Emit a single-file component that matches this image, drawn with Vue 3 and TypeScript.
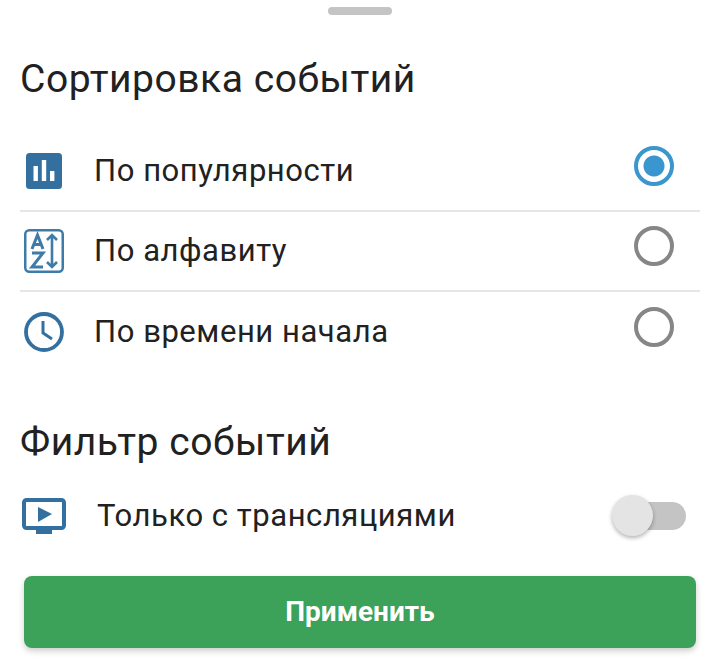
<script setup lang="ts">
// Rows of the sort list
const sortRows = [
  { key: 'popular', label: 'По популярности', selected: true },
  { key: 'alpha', label: 'По алфавиту', selected: false },
  { key: 'time', label: 'По времени начала', selected: false },
];
</script>

<template>
  <div class="sheet">
    <div class="handle"></div>
    <h2 class="title sort-title">Сортировка событий</h2>
    <div class="sort-list">
      <div v-for="row in sortRows" :key="row.key" class="sort-row">
        <span class="icon">
          <svg v-if="row.key === 'popular'" width="36" height="36" viewBox="0 0 36 36">
            <rect x="0" y="0" width="36" height="36" rx="3.5" fill="#33709f" />
            <rect x="7.5" y="13" width="4.4" height="15" fill="#fff" />
            <rect x="15.8" y="7" width="4.4" height="21" fill="#fff" />
            <rect x="24" y="18" width="4.4" height="10" fill="#fff" />
          </svg>
          <svg v-else-if="row.key === 'alpha'" width="40" height="44" viewBox="0 0 40 44" fill="none" stroke="#3f7ba8">
            <rect x="1.25" y="1.25" width="37.5" height="41.5" rx="4" stroke-width="2.5" />
            <path d="M8 20 L13.5 6 L19 20 M10 15.5 H17" stroke-width="3" />
            <path d="M8 24 H19 L8 38 H19" stroke-width="3" />
            <path d="M28 6 V38 M23 11 L28 6 L33 11 M23 33 L28 38 L33 33" stroke-width="2.6" />
          </svg>
          <svg v-else width="40" height="40" viewBox="0 0 40 40" fill="none" stroke="#33709f">
            <circle cx="20" cy="20" r="18" stroke-width="3.8" />
            <path d="M19 9 V21 L28 27" stroke-width="3" />
          </svg>
        </span>
        <span class="label">{{ row.label }}</span>
        <span :class="['radio', { on: row.selected }]"></span>
      </div>
    </div>
    <h2 class="title filter-title">Фильтр событий</h2>
    <div class="filter-row">
      <svg class="tv" width="44" height="37" viewBox="0 0 44 37">
        <rect x="2" y="2" width="40" height="28" rx="2.5" fill="none" stroke="#33709f" stroke-width="4" />
        <path d="M16 9 L30 16 L16 24 Z" fill="#33709f" />
        <rect x="14" y="30" width="16" height="6" fill="#33709f" />
      </svg>
      <span class="label">Только с трансляциями</span>
      <span class="switch"><span class="thumb"></span></span>
    </div>
    <button class="apply">Применить</button>
  </div>
</template>

<style>
html, body {
  margin: 0;
  background: #fff;
}
</style>

<style scoped>
.sheet {
  width: 720px;
  height: 662px;
  box-sizing: border-box;
  padding-top: 7px;
  overflow: hidden;
  background: #fff;
  font-family: Roboto, "Liberation Sans", sans-serif;
  color: #212121;
}
.handle {
  width: 64px;
  height: 8px;
  margin: 0 auto;
  border-radius: 4px;
  background: #c4c4c4;
}
.title {
  margin: 0;
  font-size: 39px;
  line-height: 44px;
  font-weight: 400;
  letter-spacing: 0.55px;
}
.sort-title {
  margin: 42px 0 0 20px;
}
.sort-list {
  margin: 31px 20px 0;
}
.sort-row {
  height: 80px;
  display: flex;
  align-items: center;
  box-sizing: border-box;
  border-bottom: 2px solid #e6e6e6;
}
.sort-row:last-child {
  border-bottom: none;
}
.icon {
  width: 75px;
  display: flex;
  justify-content: center;
  padding-right: 27px;
  box-sizing: border-box;
}
.label {
  font-size: 31px;
  line-height: 40px;
  letter-spacing: 0.55px;
  flex: 1;
}
.sort-row .label {
  margin-left: -1px;
}
.radio {
  width: 40px;
  height: 40px;
  margin-right: 26px;
  margin-bottom: 10px;
  box-sizing: border-box;
  border: 4px solid #868686;
  border-radius: 50%;
}
.radio.on {
  border-color: #3a96cf;
  background: radial-gradient(circle, #3a96cf 0 10px, #fff 11px);
}
.filter-title {
  margin: 48px 0 0 20px;
}
.filter-row {
  height: 64px;
  margin-top: 20px;
  display: flex;
  align-items: center;
  padding-left: 22px;
}
.tv {
  margin-right: 31px;
}
.switch {
  position: relative;
  width: 64px;
  height: 28px;
  margin-right: 34px;
  border-radius: 14px;
  background: #c4c4c4;
}
.thumb {
  position: absolute;
  left: -10px;
  top: -7px;
  width: 41px;
  height: 41px;
  border-radius: 50%;
  background: #e4e4e4;
  box-shadow: 0 2px 4px rgba(0, 0, 0, 0.3);
}
.apply {
  display: block;
  width: 672px;
  height: 72px;
  margin: 28px 0 0 24px;
  padding: 0 0 2px;
  border: none;
  border-radius: 8px;
  background: #3ca159;
  color: #fff;
  font-family: inherit;
  font-size: 28px;
  font-weight: 700;
  box-shadow: 0 3px 6px rgba(0, 0, 0, 0.2);
}
</style>
